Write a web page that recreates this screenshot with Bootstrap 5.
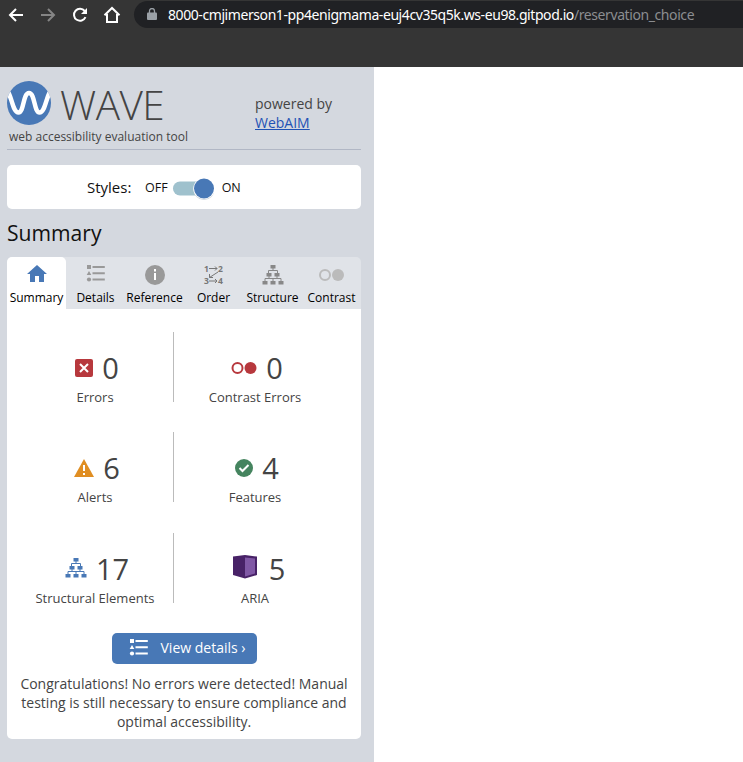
<!DOCTYPE html>
<html lang="en">
<head>
<meta charset="utf-8">
<meta name="viewport" content="width=device-width, initial-scale=1">
<title>WAVE Report</title>
<link href="https://cdn.jsdelivr.net/npm/bootstrap@5.3.0/dist/css/bootstrap.min.css" rel="stylesheet">
<style>
body{font-family:"Open Sans","Noto Sans",sans-serif;font-size:14px;line-height:19px;color:#444;background:#fff;height:762px;overflow:hidden}
svg{display:block;flex:none}
.browser-bar{height:67px;background:#353535;padding-left:7px}
.nav-icons{gap:14px;padding-top:6px;width:127px}
.address{height:27px;margin-top:1px;background:#202124;border-radius:14px 0 0 14px;color:#fff;padding-left:13px;font-family:"Noto Sans","Open Sans",sans-serif;font-size:14px;white-space:nowrap}
.address .host{margin-left:11px;letter-spacing:-.42px}
.address .path{color:#8b8d90;letter-spacing:-.41px}
.sidebar{width:374px;height:695px;background:#d4d8df;padding:0 13px 0 7px}
.brand{height:83px;border-bottom:1px solid #b1b7c5;padding-top:13px}
.brand-name{font-size:40.5px;font-weight:300;line-height:46px;letter-spacing:-.5px;margin-left:9px;padding-top:2px;height:46px}
.tagline{font-size:12px;line-height:17px;margin:2px 0 0 2px;white-space:nowrap}
.powered{width:106px;padding-top:14px}
.powered a{color:#1f52b5}
.styles-box{height:44px;margin-top:15px;border-radius:5px;padding-left:80px;color:#111}
.styles-title{font-size:15px;width:45px}
.toggle-label{font-size:12.5px}
.off-label{padding-left:13px}
.switch{width:42px;height:24px;margin-top:2px}
.page-heading{font-size:21.1px;line-height:30px;margin:9px 0;color:#111;font-weight:400}
.tabs{height:52px;background:#e0e3e8;border-radius:5px 5px 0 0}
.tabs .nav-link{width:59px;height:52px;padding:7px 0 0;color:#000;font-size:12px;line-height:17px;white-space:nowrap;border-radius:5px 5px 0 0}
.tabs .nav-link.active{background:#fff}
.tabs svg{height:22px;margin-bottom:3px;overflow:visible}
.panel{height:430px;border-radius:0 0 5px 5px}
.counts{padding:23px 25px 0 10px;display:grid;grid-template-columns:157px 162px;row-gap:30.4px}
.count-cell{height:70px;padding-top:18px}
.count-cell:nth-child(odd){border-right:1px solid #bbb}
.figure-row{height:35px;gap:9px;padding-left:4px}
.figure-row.wide{gap:12px;padding-left:8px}
.figure-row.wide svg{margin-top:-3px}
.number{font-size:29px;line-height:35px}
.count-label{font-size:13px;line-height:18px;margin-top:3px;white-space:nowrap}
.details-btn{width:145px;height:31px;margin-top:30px;background:#4878b6;border-radius:5px;color:#fff;font-size:14px;padding:0 0 1px 17px;gap:12px;border:0;white-space:nowrap}
.message{margin:10px 0 0;white-space:nowrap}
</style>
<script src="https://cdn.jsdelivr.net/npm/bootstrap@5.3.0/dist/js/bootstrap.bundle.min.js"></script>
</head>
<body>
<svg width="0" height="0" class="position-absolute" aria-hidden="true">
<symbol id="list" viewBox="0 0 20 18"><path d="M1 0h4v4H1zM3 6l2.3 4H.7z"/><circle cx="3" cy="14.500" r="2.100"/><path d="M6.500 1h12.300v2H6.500zM6.500 7.300h12.300v2H6.500zM6.500 13.500h12.300v2H6.500z"/></symbol>
<symbol id="tree" viewBox="0 0 22 20"><path d="M8.500 0h5v3.500h-5zM4.500 8h5v3.500h-5zM12.500 8h5v3.500h-5zM.5 16h5v3.500h-5zM8.500 16h5v3.500h-5zM16.500 16h5v3.500h-5z"/><path d="M11 3v2.500M6.500 8V5.500h9V8M7 11v2.500M15 11v2.500M3 16v-2.500h16V16M11 13.500V16" fill="none" stroke="currentColor"/></symbol>
</svg>
<header class="browser-bar d-flex align-items-start">
<div class="nav-icons d-flex">
<svg width="18" height="18" viewBox="0 0 18 18" fill="none" stroke="#fff" stroke-width="2"><path d="M16 9H3M9 3L3 9l6 6"/></svg>
<svg width="18" height="18" viewBox="0 0 18 18" fill="none" stroke="#858585" stroke-width="2"><path d="M2 9h13M9 3l6 6-6 6"/></svg>
<svg width="18" height="18" viewBox="0 0 18 18"><path d="M14.500 11.200A6 6 0 1 1 13.700 5" fill="none" stroke="#fff" stroke-width="2"/><path d="M16 2v6h-6z" fill="#fff"/></svg>
<svg width="18" height="18" viewBox="0 0 18 18"><path d="M1.500 9.200L9 2l7.500 7.200M4 8v8h10V8" fill="none" stroke="#fff" stroke-width="2"/></svg>
</div>
<div class="address d-flex align-items-center flex-grow-1">
<svg width="10" height="13" viewBox="0 0 10 13"><path d="M1 4.500h8q1 0 1 1V11q0 1-1 1H1q-1 0-1-1V5.500q0-1 1-1z" fill="#9aa0a6"/><path d="M2.500 5V3a2.500 2.500 0 0 1 5 0v2" fill="none" stroke="#9aa0a6" stroke-width="1.300"/></svg>
<span class="host">8000-cmjimerson1-pp4enigmama-euj4cv35q5k.ws-eu98.gitpod.io</span><span class="path">/reservation_choice</span>
</div>
</header>
<aside class="sidebar">
<div class="brand d-flex justify-content-between">
<div>
<div class="d-flex align-items-center">
<svg width="44" height="46" viewBox="0 0 44 46"><defs><clipPath id="disc"><circle cx="22" cy="23" r="22"/></clipPath></defs><circle cx="22" cy="23" r="22" fill="#4878b6"/><path d="M1 12C5 18 6 32.500 11.500 32.500C17 32.500 16 13 22 13S27 32.500 32.500 32.500C38 32.500 39 18 43 12" fill="none" stroke="#fff" stroke-width="4.500" clip-path="url(#disc)"/></svg>
<div class="brand-name">WAVE</div>
</div>
<div class="tagline">web accessibility evaluation tool</div>
</div>
<div class="powered">powered by<br><a href="#">WebAIM</a></div>
</div>
<div class="styles-box bg-white d-flex align-items-center">
<span class="styles-title">Styles:</span><span class="toggle-label off-label">OFF</span>
<svg class="switch ms-1" viewBox="0 0 42 24"><rect x="1" y="5.500" width="38" height="14" rx="7" fill="#9fc1cd"/><circle cx="32" cy="13.500" r="10.500" fill="#ccd3da"/><circle cx="32" cy="12.500" r="10.700" fill="#fff"/><circle cx="32" cy="12.500" r="10" fill="#4878b6"/></svg>
<span class="toggle-label ps-2">ON</span>
</div>
<h1 class="page-heading">Summary</h1>
<nav class="tabs nav flex-nowrap">
<a class="nav-link active d-flex flex-column align-items-center" href="#"><svg width="20" viewBox="0 0 20 22" fill="#4878b6"><path d="M10 1l10 9h-3v8h-5v-6H8v6H3v-8H0z"/></svg>Summary</a>
<a class="nav-link d-flex flex-column align-items-center" href="#"><svg width="20" viewBox="0 0 20 22" fill="#999"><use href="#list" y="1" width="20" height="18"/></svg>Details</a>
<a class="nav-link d-flex flex-column align-items-center" href="#"><svg width="20" viewBox="0 0 20 22"><circle cx="10" cy="11" r="10" fill="#999"/><path d="M9 5h2v2.500H9zM9 9h2v7H9z" fill="#fff"/></svg>Reference</a>
<a class="nav-link d-flex flex-column align-items-center" href="#"><svg width="20" viewBox="0 0 20 22" fill="#777"><g font-family="Open Sans, sans-serif" font-size="8.500" font-weight="700"><text x="0" y="7.500">1</text><text x="14" y="7.500">2</text><text x="0" y="20">3</text><text x="14" y="20">4</text></g><path d="M5 4.500h8M11 2.500l2 2-2 2M5 17h8M11 15l2 2-2 2M14 8l-8.500 5.500M5.500 10v3.500h3.500" fill="none" stroke="#777"/></svg>Order</a>
<a class="nav-link d-flex flex-column align-items-center" href="#"><svg width="22" viewBox="0 0 22 22" fill="#888" color="#888"><use href="#tree" y="1" width="22" height="20"/></svg>Structure</a>
<a class="nav-link d-flex flex-column align-items-center" href="#"><svg width="26" viewBox="0 0 26 22"><circle cx="6" cy="11" r="5" fill="none" stroke="#bbb" stroke-width="2"/><circle cx="19" cy="11" r="6" fill="#bbb"/></svg>Contrast</a>
</nav>
<main class="panel bg-white">
<div class="counts text-center">
<div class="count-cell"><div class="figure-row d-flex justify-content-center align-items-center"><svg width="18" height="18" viewBox="0 0 18 18"><rect width="18" height="18" rx="2" fill="#b7383d"/><path d="M5 5l8 8M13 5l-8 8" stroke="#fff" stroke-width="2"/></svg><span class="number">0</span></div><div class="count-label">Errors</div></div>
<div class="count-cell"><div class="figure-row d-flex justify-content-center align-items-center"><svg width="26" height="14" viewBox="0 0 26 14"><circle cx="6.500" cy="7" r="5" fill="none" stroke="#b7383d" stroke-width="2"/><circle cx="19.500" cy="7" r="6" fill="#b7383d"/></svg><span class="number">0</span></div><div class="count-label">Contrast Errors</div></div>
<div class="count-cell"><div class="figure-row d-flex justify-content-center align-items-center"><svg width="20" height="18" viewBox="0 0 20 18"><path d="M10 0l10 18H0z" fill="#e08e22"/><path d="M9 6h2v6H9zM9 14h2v2H9z" fill="#fff"/></svg><span class="number">6</span></div><div class="count-label">Alerts</div></div>
<div class="count-cell"><div class="figure-row d-flex justify-content-center align-items-center"><svg width="18" height="18" viewBox="0 0 18 18"><circle cx="9" cy="9" r="9" fill="#45845f"/><path d="M4.500 9l3 3 6-6" fill="none" stroke="#fff" stroke-width="2"/></svg><span class="number">4</span></div><div class="count-label">Features</div></div>
<div class="count-cell"><div class="figure-row d-flex justify-content-center align-items-center"><svg width="22" height="20" fill="#4878b6" color="#4878b6"><use href="#tree" width="22" height="20"/></svg><span class="number">17</span></div><div class="count-label">Structural Elements</div></div>
<div class="count-cell"><div class="figure-row wide d-flex justify-content-center align-items-center"><svg width="24" height="24" viewBox="0 0 24 24"><path d="M0 1.500L12 0l12 1.500v18.500l-12 3.500L0 20z" fill="#482267"/><path d="M12 2.500l10 1v15L12 21.500z" fill="#8058a5"/></svg><span class="number">5</span></div><div class="count-label">ARIA</div></div>
</div>
<button class="details-btn btn d-flex align-items-center mx-auto"><svg width="20" height="18" fill="#fff"><use href="#list" width="20" height="18"/></svg>View details ›</button>
<p class="message text-center">Congratulations! No errors were detected! Manual<br>testing is still necessary to ensure compliance and<br>optimal accessibility.</p>
</main>
</aside>
</body>
</html>
